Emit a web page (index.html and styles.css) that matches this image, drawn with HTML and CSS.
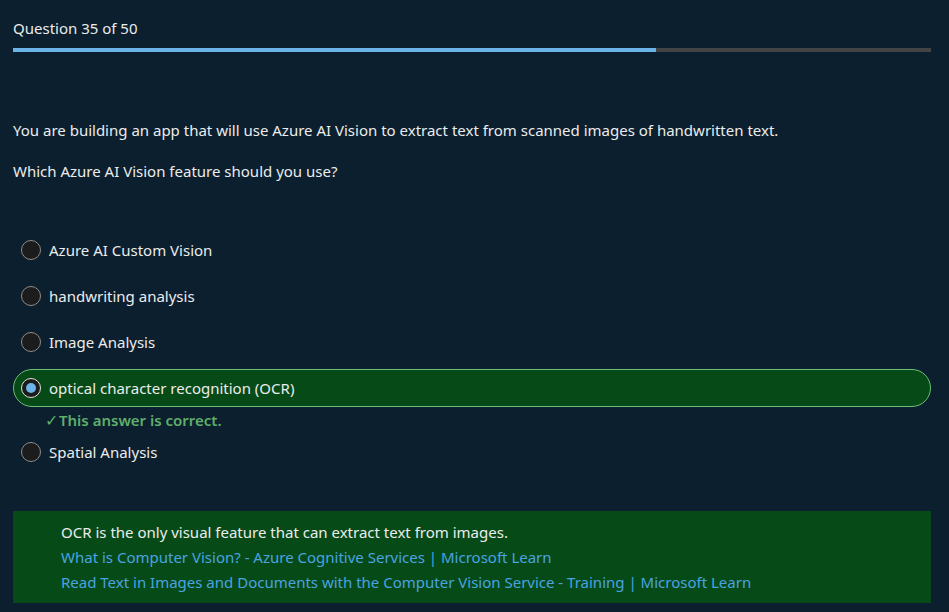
FILE: index.html
```html
<!DOCTYPE html>
<html lang="en">
<head>
<meta charset="utf-8">
<title>Question 35 of 50</title>
<link rel="stylesheet" href="styles.css">
</head>
<body>
<main class="quiz">
  <div class="counter">Question 35 of 50</div>
  <div class="progress"><div class="progress-fill" style="width:70%"></div></div>

  <p class="question">You are building an app that will use Azure AI Vision to extract text from scanned images of handwritten text.</p>
  <p class="question q2">Which Azure AI Vision feature should you use?</p>

  <ul class="options">
    <li class="option"><span class="radio"></span><span class="label">Azure AI Custom Vision</span></li>
    <li class="option"><span class="radio"></span><span class="label">handwriting analysis</span></li>
    <li class="option"><span class="radio"></span><span class="label">Image Analysis</span></li>
    <li class="option selected"><span class="radio"><span class="dot"></span></span><span class="label">optical character recognition (OCR)</span></li>
    <li class="feedback"><span class="check">✓</span>This answer is correct.</li>
    <li class="option last"><span class="radio"></span><span class="label">Spatial Analysis</span></li>
  </ul>

  <section class="explanation">
    <p class="expl-text">OCR is the only visual feature that can extract text from images.</p>
    <a class="expl-link" href="#">What is Computer Vision? - Azure Cognitive Services | Microsoft Learn</a>
    <a class="expl-link" href="#">Read Text in Images and Documents with the Computer Vision Service - Training | Microsoft Learn</a>
  </section>
</main>
</body>
</html>
```
FILE: styles.css
```css
html, body {
  margin: 0;
  padding: 0;
  background: #0b1f2e;
}
body {
  font-family: "Noto Sans", "Open Sans", sans-serif;
  font-size: 15px;
  color: #ececec;
}
.quiz {
  padding: 18px 18px 0 13px;
}
.counter {
  line-height: 20px;
  height: 20px;
}
.progress {
  margin-top: 10px;
  height: 4px;
  background: #444444;
}
.progress-fill {
  height: 4px;
  background: #6cb4e8;
}
.question {
  margin: 68px 0 0 0;
  line-height: 20px;
}
.question.q2 {
  margin-top: 21px;
}
.options {
  list-style: none;
  margin: 51px 0 0 0;
  padding: 0;
}
.option {
  display: flex;
  align-items: center;
  height: 36px;
  padding-left: 8px;
  margin-bottom: 10px;
  box-sizing: border-box;
}
.radio {
  width: 20px;
  height: 20px;
  border-radius: 50%;
  border: 1px solid #8c8c8c;
  background: #1c1c1c;
  box-sizing: border-box;
  display: flex;
  align-items: center;
  justify-content: center;
  flex-shrink: 0;
}
.label {
  margin-left: 8px;
}
.option.selected {
  background: #064b17;
  border: 1px solid #6cbf72;
  border-radius: 19px;
  height: 38px;
  margin-top: -1px;
  margin-bottom: 0;
  padding-left: 7px;
}
.option.selected .radio {
  border: 1px solid #e0e0e0;
  background: #1c1c1c;
}
.dot {
  width: 10px;
  height: 10px;
  border-radius: 50%;
  background: #6cb4e8;
}
.feedback {
  color: #5fae6b;
  font-weight: 600;
  line-height: 20px;
  padding: 3px 0 0 32px;
  height: 27px;
  box-sizing: border-box;
}
.check {
  font-weight: 400;
  font-size: 16px;
  margin-right: 1px;
}
.option.last {
  margin-top: 0;
}
.explanation {
  margin-top: 41px;
  background: #064b17;
  padding: 9px 0 8px 48px;
  display: flex;
  flex-direction: column;
}
.expl-text {
  margin: 0;
  line-height: 25px;
}
.expl-link {
  color: #4aa3e0;
  text-decoration: none;
  line-height: 25px;
}
```
